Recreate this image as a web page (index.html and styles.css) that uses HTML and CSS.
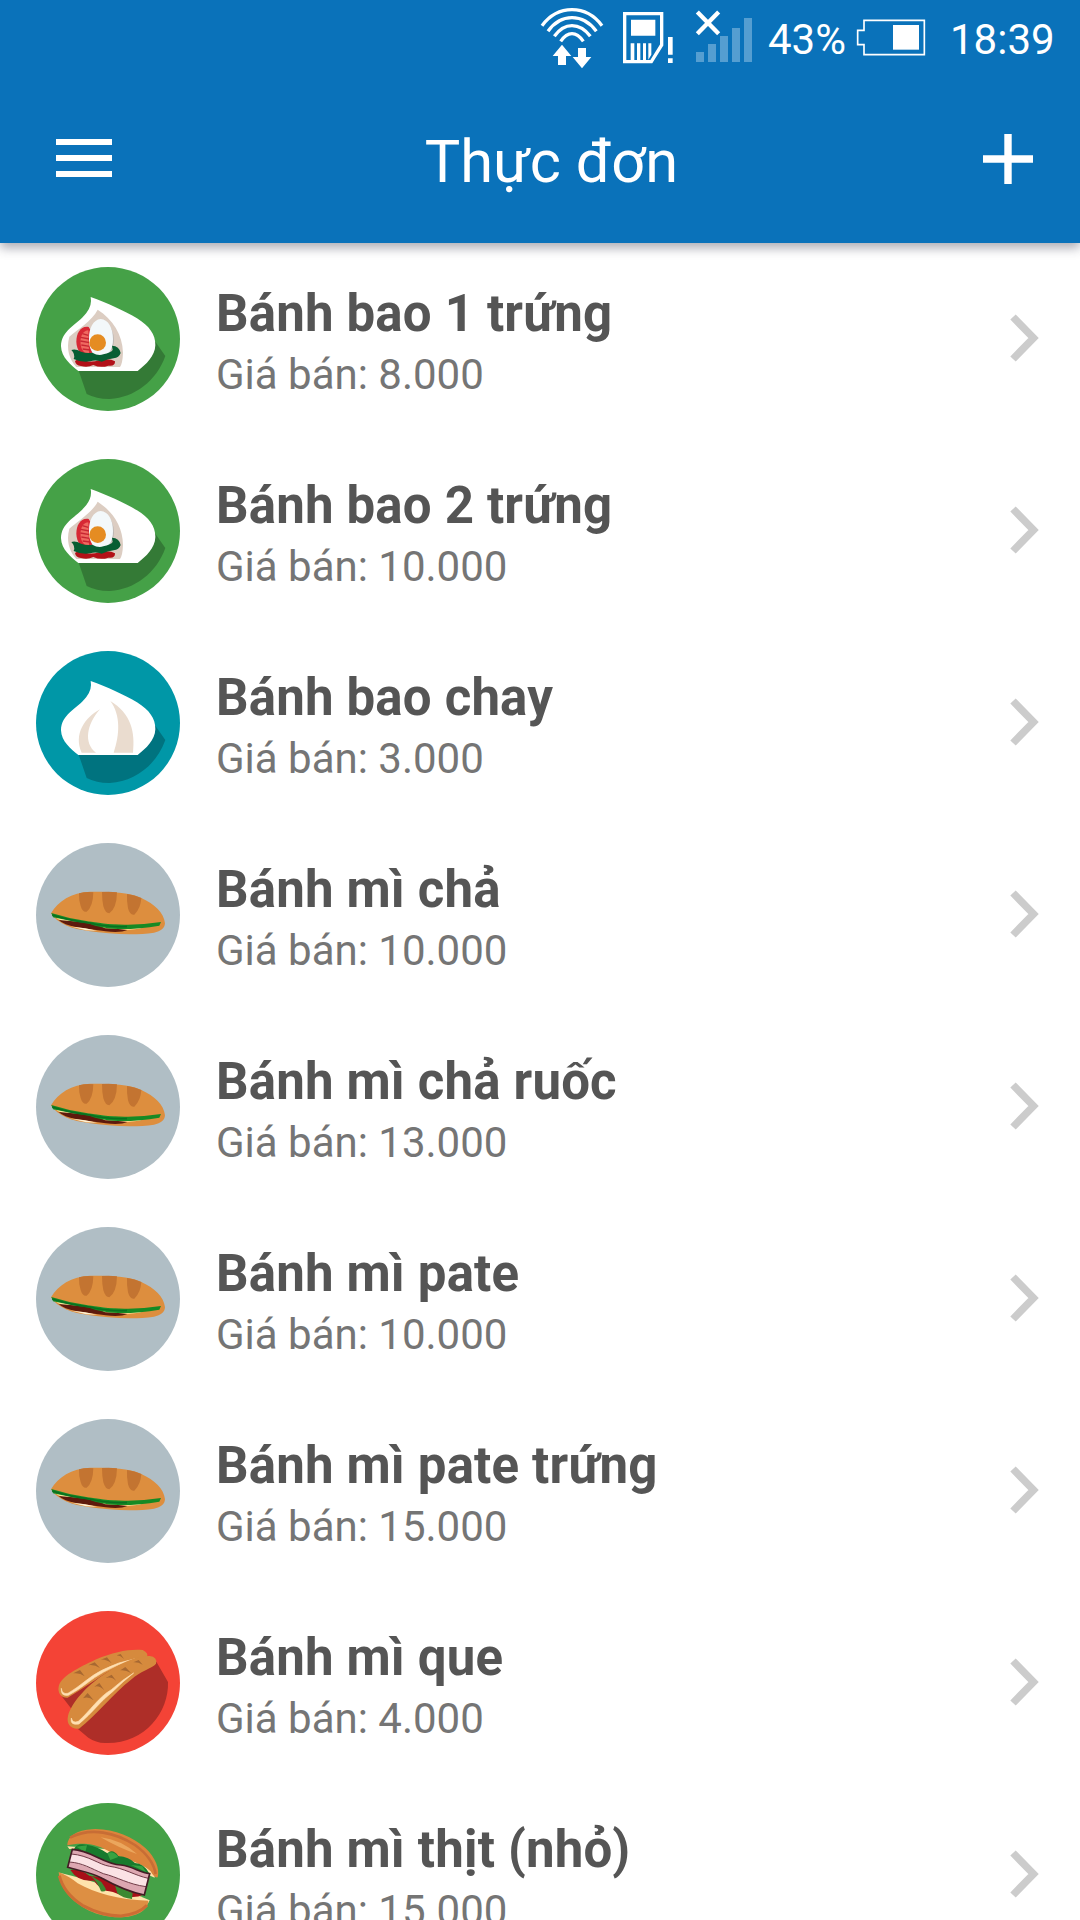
FILE: index.html
```html
<!DOCTYPE html>
<html lang="vi">
<head>
<meta charset="utf-8">
<title>Thực đơn</title>
<link rel="stylesheet" href="styles.css">
</head>
<body>
<svg class="sprite" aria-hidden="true">
  <symbol id="bun-shape" viewBox="30 30 432 432">
    <path d="M158 341L182 411Q214 427 252 426C326 421 391 373 418 297L386 251L335 341Z" fill="#000" fill-opacity=".24"/>
    <path d="M194 120C244 138 293 160 333 184C370 207 389 233 388 265C387 297 361 322 335 342H157C135 325 106 301 105 268C106 219 151 206 181 168Q199 145 194 120Z" fill="#fff"/>
  </symbol>
  <symbol id="egg-bun" viewBox="30 30 432 432">
    <circle cx="246" cy="246" r="216" fill="#45a147"/>
    <use href="#bun-shape" x="30" y="30" width="432" height="432"/>
    <path d="M215 158C260 187 290 232 291 287Q290 318 282 330H151C130 307 120 276 130 239C154 218 199 190 215 158Z" fill="#dccdc2"/>
    <path d="M188 210C163 206 151 230 151 254C152 280 166 300 190 298L201 282L193 218Z" fill="#d72834"/>
    <path d="M187 220C166 220 159 250 166 272Q172 290 189 291Z" fill="#ef6960"/>
    <path d="M169 230L187 235M164 241L190 246M163 252L191 257M166 264L191 268M170 276L192 279" stroke="#c72632" stroke-width="4"/>
    <path d="M235 188Q264 212 264 252Q263 278 246 293L227 291Z" fill="#bcb6b3"/>
    <path d="M224 186C201 188 189 215 189 243C188 277 200 298 225 297C249 297 261 277 261 246C261 213 247 187 224 186Z" fill="#f3f8fa"/>
    <circle cx="215" cy="257" r="25" fill="#e58c22"/>
    <path d="M147 312Q156 304 180 311Q198 317 218 310Q250 302 267 313Q268 329 247 326Q224 334 202 324Q184 333 165 327Q149 326 147 312Z" fill="#b21118"/>
    <path d="M136 279Q148 274 165 284Q181 290 199 287Q216 297 232 292Q253 288 260 279L258 266Q280 267 284 288Q279 303 263 304Q244 306 227 314Q208 307 193 313Q169 318 143 306Q149 292 136 279Z" fill="#075d32"/>
  </symbol>
  <symbol id="plain-bun" viewBox="30 30 432 432">
    <circle cx="246" cy="246" r="216" fill="#0097a7"/>
    <use href="#bun-shape" x="30" y="30" width="432" height="432"/>
    <path d="M222 205C176 230 142 280 167 335H210C172 307 182 249 222 205ZM253 180C285 223 281 282 263 335H321C328 275 316 217 253 180Z" fill="#eadccf"/>
  </symbol>
  <symbol id="baguette" viewBox="30 30 432 432">
    <circle cx="246" cy="246" r="216" fill="#b0bec5"/>
    <path d="M75 241C96 205 136 178 192 176C248 176 302 175 346 195C386 213 414 240 417 271C416 286 405 295 384 299C329 307 251 304 187 294C142 289 94 273 75 241Z" fill="#dd8e3e"/>
    <path d="M159 181Q181 175 202 178Q201 222 182 236Q170 239 164 219Q158 201 159 181ZM228 177Q252 175 273 178Q272 226 250 241Q238 241 232 220Q228 201 228 177ZM303 183Q327 186 346 195Q344 227 325 245Q312 248 306 226Q302 204 303 183Z" fill="#c37431"/>
    <path d="M86 251Q106 268 151 275Q211 286 277 290Q328 291 350 284L211 270Z" fill="#ffe69e"/>
    <path d="M98 261Q128 263 174 268Q218 274 237 286Q270 286 304 291Q284 300 239 295Q190 289 150 282Q114 276 98 261Z" fill="#5d1a0d"/>
    <path d="M137 281Q181 284 213 293L180 292Z" fill="#fff0d0"/>
    <path d="M76 240Q129 257 185 265Q245 276 306 275Q353 275 405 267L400 278Q336 289 276 288Q222 285 190 272Q133 265 81 253Z" fill="#168a24"/>
    <path d="M79 246Q132 263 191 270Q245 283 303 281" fill="none" stroke="#087021" stroke-width="5"/>
  </symbol>
  <symbol id="breadstick" viewBox="30 30 432 432">
    <circle cx="246" cy="246" r="216" fill="#f44336"/>
    <path d="M107 286L162 252L246 207L391 182L426 243C429 335 355 430 237 426Q209 425 187 410L155 383L135 322Z" fill="#ae2e28"/>
    <path d="M125 290C108 292 94 277 98 257C105 226 154 202 211 175C263 152 314 143 350 147Q370 158 362 168C309 178 249 207 207 238C178 256 153 275 125 290Z" fill="#d68a3d"/>
    <path d="M106 262Q108 281 126 277C164 255 190 226 229 207Q278 182 326 174Q278 188 233 213C194 234 168 262 127 283Q103 286 106 262Z" fill="#ffe0b2" stroke="#ffe0b2" stroke-width="2"/>
    <path d="M159 383C137 386 120 370 126 345C137 303 183 255 231 222C275 192 326 163 371 165Q395 168 390 188C379 202 343 210 315 236C263 276 215 338 159 383Z" fill="#d68a3d"/>
    <path d="M136 351Q140 368 157 361C193 329 217 289 256 266Q289 236 323 216Q291 241 260 272C223 300 198 337 159 369Q131 374 136 351Z" fill="#ffe0b2" stroke="#ffe0b2" stroke-width="2"/>
    <path d="M142 217Q161 214 176 226L162 207ZM187 193Q204 190 222 201L206 184ZM224 176Q239 174 257 187L243 169ZM272 163Q284 164 294 174L284 159ZM171 292Q187 285 203 298L185 276ZM205 257Q219 252 235 268L220 246ZM239 231Q257 226 271 240L257 221ZM283 208Q299 206 315 216L298 198ZM322 184Q336 183 350 191L338 177Z" fill="#a76831"/>
  </symbol>
  <symbol id="sandwich" viewBox="30 39 432 432">
    <circle cx="246" cy="255" r="216" fill="#45a147"/>
    <path d="M124 169L130 177Q185 172 247 198Q321 235 386 263L385 239L239 177Z" fill="#ffe3ab"/>
    <path d="M124 166C126 132 160 119 208 117C268 117 321 142 358 174C388 202 402 237 395 262Q384 264 374 244C345 215 286 208 243 181C206 158 157 158 124 166Z" fill="#dc843b"/>
    <path d="M132 143C195 110 269 128 327 165Q381 204 389 252" fill="none" stroke="#c86d35" stroke-width="8"/>
    <path d="M224 142Q284 149 333 192Q280 175 224 142Z" fill="#eba65d"/>
    <path d="M101 248Q139 257 176 268L342 319L371 331Q365 348 342 354Q211 327 116 267Z" fill="#ffe3ab"/>
    <path d="M98 246Q132 260 155 280C208 309 274 330 367 332C367 359 334 382 279 382C214 382 157 352 125 313Q99 281 98 246Z" fill="#dd8f43"/>
    <path d="M100 257Q112 309 169 346Q229 378 285 378Q339 372 363 346" fill="none" stroke="#cc6d34" stroke-width="9"/>
    <path d="M133 240Q165 237 190 257Q240 260 270 284Q316 288 350 315Q327 326 285 316Q259 303 240 302Q217 292 204 272Q157 277 133 240Z" fill="#a71018"/>
    <path d="M193 256L226 276L236 291Q247 306 225 304Q217 280 193 256ZM267 286L320 309L318 327Q290 325 274 310Z" fill="#3c8931"/>
    <path d="M143 180Q150 158 182 164Q218 170 244 190Q260 175 277 198Q309 201 327 219Q353 220 369 249L321 260L151 210Z" fill="#187a2d"/>
    <path d="M151 170L183 166L178 186ZM244 190Q262 180 277 201L253 210ZM315 225L349 229L360 246Z" fill="#37a342"/>
    <path d="M139 178C197 181 231 222 285 225C321 229 341 248 371 251L355 315C308 306 262 284 228 265C194 245 154 242 125 232Z" fill="#dda7b1"/>
    <path d="M135 192C188 196 219 224 251 229C293 234 328 257 367 265L359 290C307 283 274 261 232 251C194 235 157 218 130 216Z" fill="#fbe2e5"/>
    <path d="M136 192C188 196 219 224 251 229C293 234 328 257 367 265M131 216C170 219 194 235 232 251C274 261 307 283 360 290" fill="none" stroke="#703a46" stroke-width="3"/>
    <path d="M139 178C197 181 231 222 285 225C321 229 341 248 371 251L355 315C308 306 262 284 228 265C194 245 154 242 125 232Z" fill="none" stroke="#431d25" stroke-width="5"/>
  </symbol>
  <symbol id="chevron" viewBox="0 0 34 50"><path d="M5 4L25.5 25L5 46" transform="translate(-2 0)" fill="none" stroke="#ccc" stroke-width="7.5"/></symbol>
</svg>

<header class="header">
  <div class="status-bar">
    <svg class="wifi" viewBox="30 0 192 240">
      <g fill="none" stroke="#fff" stroke-width="10">
        <path d="M36 77Q72 29 126 29Q180 29 216 77"/>
        <path d="M54 94Q83 53 126 53Q169 53 199 94"/>
        <path d="M73 109Q96 77 126 77Q157 77 181 109"/>
        <path d="M92 124Q108 101 126 101Q144 101 160 124"/>
      </g>
      <path d="M96 134L124 168H108V195H84V168H68ZM144 144H168V171H184L156 205L128 171H144Z" fill="#fff"/>
    </svg>
    <svg class="sim" viewBox="276 0 156 240">
      <path d="M284 41H395V135L364 185H284Z" fill="none" stroke="#fff" stroke-width="10"/>
      <path d="M303 59H376V107H303ZM302 130H313V186H302ZM321 130H331V186H321ZM339 130H348V186H339ZM355 130H364V164L355 179ZM414 111H428V164H414ZM414 175H428V189H414Z" fill="#fff"/>
    </svg>
    <svg class="signal" viewBox="495 0 174 240">
      <path d="M498 156H522V186H498ZM534 132H558V186H534ZM570 108H594V186H570ZM606 84H630V186H606ZM642 54H666V186H642Z" fill="#559ed1"/>
      <path d="M502 36L566 101M566 36L502 101" stroke="#fff" stroke-width="13"/>
    </svg>
    <span class="charge">43%</span>
    <svg class="battery" viewBox="108 0 210 240">
      <path d="M132 61H313V164H132V134H113V91H132Z" fill="none" stroke="#fff" stroke-width="5"/>
      <path d="M219 75H297V149H219Z" fill="#fff"/>
    </svg>
    <span class="clock">18:39</span>
  </div>
  <div class="toolbar">
    <svg class="menu" viewBox="0 0 56 38"><path d="M0 0H56V6H0ZM0 16H56V22H0ZM0 32H56V38H0Z" fill="#fff"/></svg>
    <h1 class="heading">Thực đơn</h1>
    <svg class="add" viewBox="0 0 50 50"><path d="M21.3 0H28.7V21.3H50V28.7H28.7V50H21.3V28.7H0V21.3H21.3Z" fill="#fff"/></svg>
  </div>
</header>

<main class="list">
  <div class="item"><svg class="thumb"><use href="#egg-bun"/></svg><div class="info"><h2 class="name">Bánh bao 1 trứng</h2><p class="price">Giá bán: 8.000</p></div><svg class="chevron"><use href="#chevron"/></svg></div>
  <div class="item"><svg class="thumb"><use href="#egg-bun"/></svg><div class="info"><h2 class="name">Bánh bao 2 trứng</h2><p class="price">Giá bán: 10.000</p></div><svg class="chevron"><use href="#chevron"/></svg></div>
  <div class="item"><svg class="thumb"><use href="#plain-bun"/></svg><div class="info"><h2 class="name">Bánh bao chay</h2><p class="price">Giá bán: 3.000</p></div><svg class="chevron"><use href="#chevron"/></svg></div>
  <div class="item"><svg class="thumb"><use href="#baguette"/></svg><div class="info"><h2 class="name">Bánh mì chả</h2><p class="price">Giá bán: 10.000</p></div><svg class="chevron"><use href="#chevron"/></svg></div>
  <div class="item"><svg class="thumb"><use href="#baguette"/></svg><div class="info"><h2 class="name">Bánh mì chả ruốc</h2><p class="price">Giá bán: 13.000</p></div><svg class="chevron"><use href="#chevron"/></svg></div>
  <div class="item"><svg class="thumb"><use href="#baguette"/></svg><div class="info"><h2 class="name">Bánh mì pate</h2><p class="price">Giá bán: 10.000</p></div><svg class="chevron"><use href="#chevron"/></svg></div>
  <div class="item"><svg class="thumb"><use href="#baguette"/></svg><div class="info"><h2 class="name">Bánh mì pate trứng</h2><p class="price">Giá bán: 15.000</p></div><svg class="chevron"><use href="#chevron"/></svg></div>
  <div class="item"><svg class="thumb"><use href="#breadstick"/></svg><div class="info"><h2 class="name">Bánh mì que</h2><p class="price">Giá bán: 4.000</p></div><svg class="chevron"><use href="#chevron"/></svg></div>
  <div class="item"><svg class="thumb"><use href="#sandwich"/></svg><div class="info"><h2 class="name">Bánh mì thịt (nhỏ)</h2><p class="price">Giá bán: 15.000</p></div><svg class="chevron"><use href="#chevron"/></svg></div>
</main>
</body>
</html>
```
FILE: styles.css
```css
* { box-sizing: border-box; margin: 0; padding: 0; }

body {
  display: flex;
  flex-direction: column;
  height: 1920px;
  overflow: hidden;
  background: #fff;
  font-family: Roboto, "Noto Sans", sans-serif;
}

svg { display: block; flex: none; }
.sprite { display: none; }

.header {
  flex: none;
  height: 243px;
  background: #0a72ba;
  color: #fff;
  box-shadow: 0 5px 10px rgba(40, 40, 60, .38);
}

.status-bar {
  display: flex;
  align-items: center;
  height: 80px;
  padding-left: 540px;
  font-size: 42px;
  line-height: 80px;
  white-space: nowrap;
}
.wifi { width: 64px; height: 80px; margin-right: 18px; }
.sim { width: 52px; height: 80px; margin-right: 21px; }
.signal { width: 58px; height: 80px; }
.charge { width: 103px; padding-left: 15px; }
.battery { width: 70px; height: 80px; margin-right: 24px; }

.toolbar {
  display: flex;
  align-items: center;
  height: 158px;
  padding: 0 47px 0 56px;
}
.menu { width: 56px; height: 38px; margin-top: -2px; }
.heading {
  flex: 1;
  padding: 5px 0 0 8px;
  text-align: center;
  font-size: 59.5px;
  line-height: 72px;
  font-weight: 400;
}
.add { width: 50px; height: 50px; }

.list { flex: 1; overflow: hidden; }
.item {
  display: flex;
  align-items: center;
  height: 192px;
  padding: 0 36px;
}
.thumb { width: 144px; height: 144px; margin-right: 36px; }
.info { flex: 1; padding-top: 9px; white-space: nowrap; }
.name { color: #555; font-size: 51px; line-height: 62px; font-weight: 700; letter-spacing: .17px; }
.price { color: #757575; font-size: 42px; line-height: 60px; }
.chevron { width: 34px; height: 50px; margin-top: -2px; }
```
